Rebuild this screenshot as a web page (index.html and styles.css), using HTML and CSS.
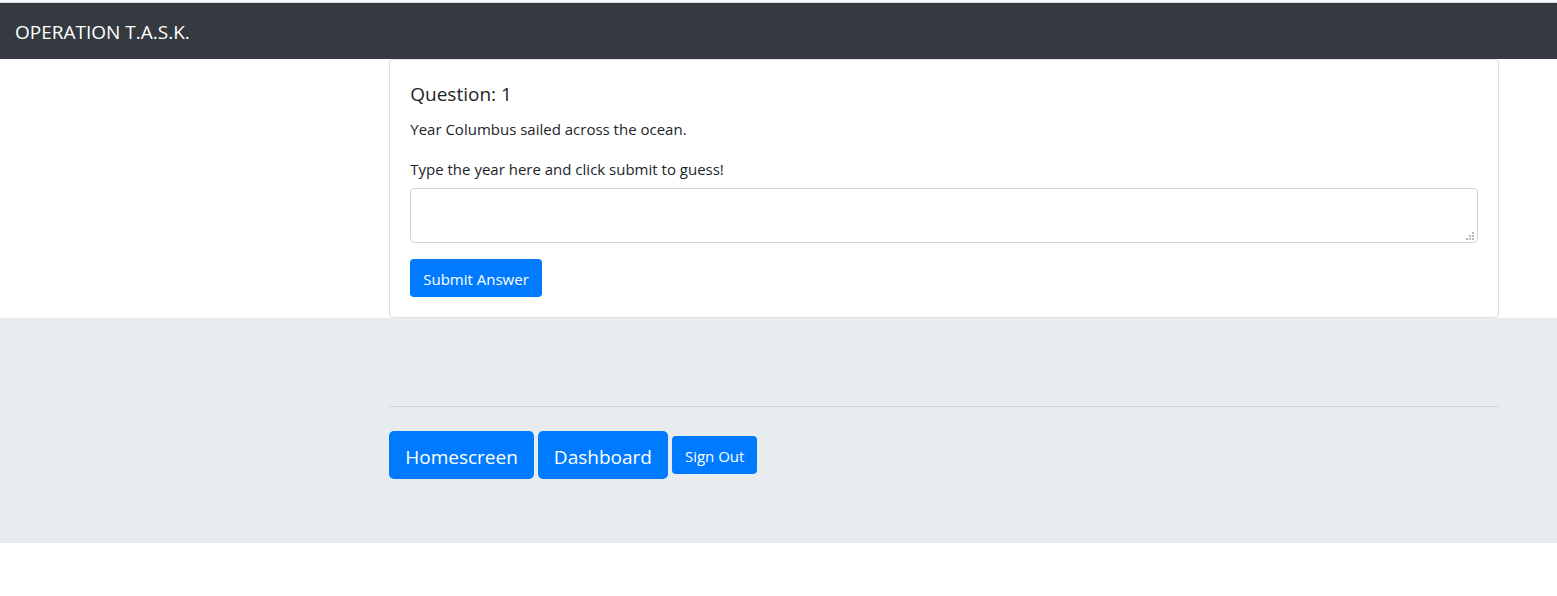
FILE: index.html
```html
<!DOCTYPE html>
<html lang="en">
<head>
<meta charset="utf-8">
<title>Operation T.A.S.K.</title>
<link rel="stylesheet" href="styles.css">
</head>
<body>
<nav class="navbar"><a class="brand" href="#">OPERATION T.A.S.K.</a></nav>
<main class="column">
  <form class="card">
    <h1 class="card-title">Question: 1</h1>
    <p class="card-text">Year Columbus sailed across the ocean.</p>
    <label class="label" for="guess">Type the year here and click submit to guess!</label>
    <textarea class="guess" id="guess"></textarea>
    <button class="btn" type="button">Submit Answer</button>
  </form>
</main>
<footer class="jumbotron">
  <div class="column">
    <hr class="rule">
    <div class="actions">
      <a class="btn btn-large" href="#">Homescreen</a>
      <a class="btn btn-large" href="#">Dashboard</a>
      <button class="btn" type="button">Sign Out</button>
    </div>
  </div>
</footer>
</body>
</html>
```
FILE: styles.css
```css
* {
  box-sizing: border-box;
}

body {
  margin: 0;
  border-top: 2px solid #f8f9fa;
  background: #fff;
  color: #212529;
  font-family: "Segoe UI", "Open Sans", "Noto Sans", sans-serif;
  font-size: 15px;
  line-height: 24px;
}

.navbar {
  display: flex;
  padding: 14px 15px 12px;
  border-top: 1px solid #dadce0;
  background: #343a40;
}

.brand {
  color: #fff;
  font-size: 19px;
  line-height: 30px;
  text-decoration: none;
}

.column {
  margin-left: 25%;
  padding-right: 58px;
}

.card {
  display: flex;
  flex-direction: column;
  align-items: flex-start;
  padding: 20px;
  border: 1px solid #dfdfdf;
  border-radius: 4px;
}

.card-title {
  margin: 2px 0 11px;
  font-size: 19px;
  font-weight: 400;
  line-height: 24px;
}

.card-text {
  margin: 0 0 16px;
}

.label {
  margin-bottom: 7px;
}

.guess {
  width: 100%;
  height: 55px;
  margin: 0 0 16px;
  padding: 6px 12px;
  border: 1px solid #ced4da;
  border-radius: 4px;
  color: #495057;
  font: inherit;
  resize: vertical;
}

.guess::-webkit-resizer {
  background: url("data:image/svg+xml,%3Csvg xmlns='http://www.w3.org/2000/svg' width='15' height='15'%3E%3Cpath fill='%23b8b8b8' d='M10 5h2v2h-2zM7 8h2v2H7zM10 8h2v2h-2zM4 11h2v2H4zM7 11h2v2H7zM10 11h2v2h-2z'/%3E%3C/svg%3E") no-repeat;
}

.btn {
  padding: 8px 13px 6px;
  border: 0;
  border-radius: 4px;
  background: #007bff;
  color: #fff;
  font: inherit;
  text-decoration: none;
}

.btn-large {
  padding: 11px 16px 7px;
  border-radius: 5px;
  font-size: 19px;
  line-height: 30px;
}

.jumbotron {
  padding: 88px 0 64px;
  background: #e9ecef;
}

.rule {
  margin: 0 0 24px;
  border: 0;
  border-top: 1px solid #cfd2d5;
}

.actions {
  display: flex;
  align-items: center;
  gap: 4px;
}
```
